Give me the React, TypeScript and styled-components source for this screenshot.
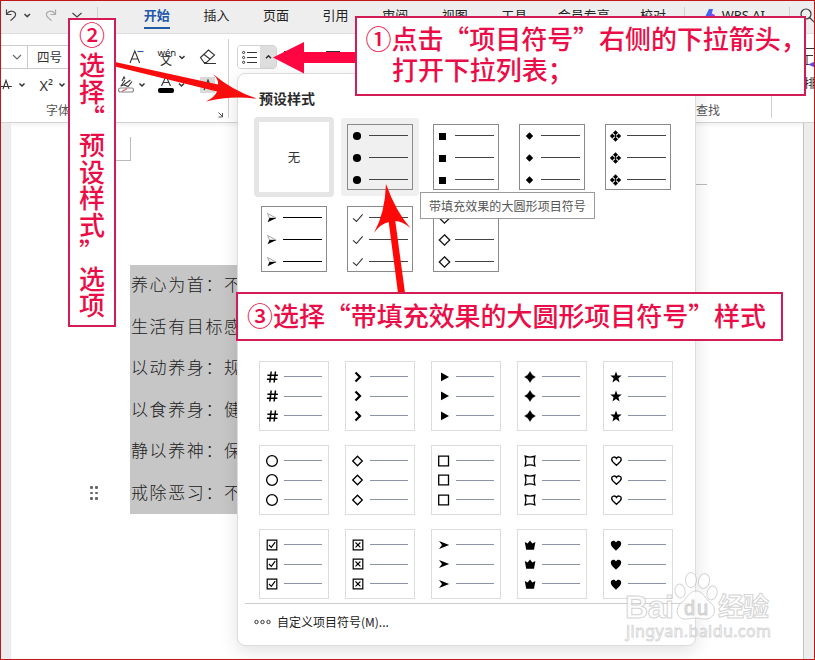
import React from "react";
import styled, { createGlobalStyle, css } from "styled-components";

const GlobalStyle = createGlobalStyle`
  * { box-sizing: border-box; }
  body { margin: 0; overflow: hidden; font-family: "Noto Sans CJK SC", "Noto Sans", sans-serif; }
  svg { display: block; flex: none; }
`;

const Screen = styled.div`
  position: relative;
  display: flex;
  flex-direction: column;
  width: 815px;
  height: 660px;
  overflow: hidden;
  background: #fff;
  color: #222;
`;

const Frame = styled.div`
  position: absolute;
  inset: 0;
  border: 1px solid #c01818;
  pointer-events: none;
`;

/* ---------- top tab bar ---------- */

const TabBar = styled.nav`
  display: flex;
  align-items: center;
  height: 34px;
  flex: none;
  background: #eeeeee;
  border-bottom: 1px solid #dedede;
`;

const QuickAccess = styled.div`
  display: flex;
  width: 127px;
  height: 33px;
  flex: none;
`;

const Tab = styled.div<{ $wide?: boolean; $active?: boolean }>`
  display: flex;
  flex-direction: column;
  align-items: center;
  width: ${(p) => (p.$wide ? 79 : 59.6)}px;
  flex: none;
  font-size: 13px;
  line-height: 20px;
  white-space: nowrap;
  color: ${(p) => (p.$active ? "#2458a8" : "#222")};
  font-weight: ${(p) => (p.$active ? 700 : 400)};
  &::after {
    content: "";
    width: 26px;
    height: 2px;
    margin-top: 2px;
    background: ${(p) => (p.$active ? "#2458a8" : "transparent")};
  }
`;

const TabDivider = styled.div<{ $gap: number }>`
  width: 1px;
  height: 20px;
  margin-left: ${(p) => p.$gap}px;
  background: #cfcfcf;
`;

const AiTab = styled.div`
  display: flex;
  align-items: center;
  gap: 5px;
  width: 86px;
  margin-left: 18px;
  padding-bottom: 3px;
  font-size: 13px;
  line-height: 20px;
  font-family: "Noto Sans", sans-serif;
  white-space: nowrap;
`;

/* ---------- ribbon ---------- */

const Ribbon = styled.section`
  display: flex;
  height: 89px;
  flex: none;
  background: #fff;
  border-bottom: 1px solid #d4d4d4;
`;

const FontGroup = styled.div`
  display: flex;
  flex-direction: column;
  width: 228px;
  padding-top: 11px;
  flex: none;
`;

const GroupEdge = styled.div<{ $top: number; $height: number }>`
  width: 1px;
  height: ${(p) => p.$height}px;
  margin-top: ${(p) => p.$top}px;
  background: #d0d0d0;
  flex: none;
`;

const ToolRow = styled.div`
  display: flex;
  align-items: center;
  height: 24px;
`;

const CommandRow = styled.div`
  display: flex;
  height: 30px;
`;

const FieldPart = styled.div<{ $width: number }>`
  display: flex;
  align-items: center;
  justify-content: flex-end;
  width: ${(p) => p.$width}px;
  height: 24px;
  border: 1px solid #cbcbcb;
  border-left: 0;
  font-size: 12.5px;
`;

const SizeField = styled(FieldPart)`
  justify-content: flex-start;
  padding: 0 0 2px 9px;
  color: #333;
`;

const GroupCaption = styled.div`
  display: flex;
  justify-content: space-between;
  align-items: center;
  height: 22px;
  padding: 0 3px 0 46px;
  font-size: 12px;
  line-height: 18px;
  color: #555;
`;

const CaptionIcon = styled.svg`
  margin-top: 10px;
`;

const ParagraphGroup = styled.div`
  display: flex;
  gap: 5px;
  width: 467px;
  flex: none;
  padding: 11px 0 0 8px;
`;

const SplitButton = styled.div`
  display: flex;
  width: 40px;
  height: 24px;
  border: 1px solid #d2d2d2;
  border-radius: 4px;
  overflow: hidden;
  background: #fff;
`;

const SplitHalf = styled.div<{ $pressed?: boolean }>`
  display: flex;
  align-items: center;
  justify-content: center;
  flex: ${(p) => (p.$pressed ? "0 0 16px" : "1")};
  background: ${(p) => (p.$pressed ? "#dedede" : "#fff")};
`;

const FindGroup = styled.div`
  display: flex;
  align-items: flex-end;
  width: 75px;
  flex: none;
  padding-bottom: 2px;
  font-size: 12px;
  line-height: 20px;
  color: #555;
`;

const ClippedGroup = styled.div`
  display: flex;
  flex-direction: column;
  width: 11px;
  margin-left: 32px;
  flex: none;
  padding-top: 12px;
  gap: 5px;
  overflow: hidden;
  font-size: 12px;
  line-height: 20px;
  white-space: nowrap;
`;

/* ---------- document ---------- */

const Workspace = styled.main`
  display: flex;
  flex: 1;
  padding: 0 11px 0 11px;
  background: #ececec;
`;

const Paper = styled.article`
  display: flex;
  flex: 1;
  border-right: 1px solid #c9c3c0;
  background: linear-gradient(#f3f3f3 0, #fff 5px);
`;

const PaperMargin = styled.div`
  display: flex;
  flex-direction: column;
  width: 119px;
  flex: none;
`;

const DragHandle = styled.div`
  display: grid;
  grid-template-columns: repeat(2, 3px);
  gap: 3px 2px;
  margin: 363px 0 0 79px;
`;

const DragDot = styled.i`
  width: 2.5px;
  height: 2.5px;
  border-radius: 1px;
  background: #666;
`;

const TextColumn = styled.div`
  display: flex;
  flex-direction: column;
  width: 566px;
`;

const MarginMark = styled.div`
  width: 1px;
  height: 24px;
  margin: 14px 0 104px 0;
  background: #bbb;
`;

const Selection = styled.div`
  width: 108px;
  overflow: hidden;
  background: #c6c6c6;
`;

const Paragraph = styled.p`
  margin: 0;
  padding-left: 1px;
  height: 41.5px;
  font-size: 17px;
  font-weight: 300;
  line-height: 37px;
  letter-spacing: 1.6px;
  white-space: nowrap;
  color: #222;
`;

const MarginTick = styled.div`
  width: 11px;
  height: 1px;
  margin-top: 61px;
  background: #bbb;
`;

/* ---------- bullet menu ---------- */

const Menu = styled.div`
  position: absolute;
  left: 237px;
  top: 73px;
  display: flex;
  flex-direction: column;
  width: 459px;
  height: 573px;
  border: 1px solid #dcdcdc;
  border-radius: 8px;
  background: #fff;
  box-shadow: 0 5px 18px rgba(0, 0, 0, 0.12);
`;

const MenuTitle = styled.h2`
  margin: 14px 0 0 21px;
  height: 21px;
  font-size: 14px;
  line-height: 20px;
  font-weight: 700;
  color: #2b2b2b;
`;

const PresetGrid = styled.div`
  display: grid;
  grid-template-columns: repeat(5, 86px);
  grid-auto-rows: 82px;
  margin: 6px 0 0 13px;
  height: 164px;
`;

const PresetSlot = styled.div<{ $hover?: boolean }>`
  display: flex;
  align-items: center;
  justify-content: center;
  width: 78px;
  height: 78px;
  margin: 3px 0 0 4px;
  border-radius: 3px;
  background: ${(p) => (p.$hover ? "#f0f0f0" : "transparent")};
`;

const NoneSlot = styled.div`
  display: flex;
  align-items: center;
  justify-content: center;
  width: 80px;
  height: 80px;
  margin: 2px 0 0 3px;
  padding-bottom: 2px;
  border: 5px solid #e5e5e5;
  border-radius: 4px;
  font-size: 12.5px;
  color: #333;
`;

const tile = css`
  display: flex;
  flex-direction: column;
`;

const PresetTile = styled.div`
  ${tile}
  width: 66px;
  height: 66px;
  border: 1px solid #8a8a8a;
`;

const SymbolGrid = styled.div`
  display: grid;
  grid-template-columns: repeat(5, 70px);
  grid-auto-rows: 70px;
  gap: 14px 16px;
  margin: 82px 0 0 21px;
`;

const SymbolTile = styled.div`
  ${tile}
  width: 70px;
  height: 70px;
  padding-top: 5px;
  border: 1px solid #dcdcdc;
`;

const BulletLine = styled.div<{ $height: number; $pad: number; $gap: number; $lift?: boolean }>`
  display: flex;
  align-items: center;
  gap: ${(p) => p.$gap}px;
  height: ${(p) => p.$height}px;
  flex: none;
  padding-left: ${(p) => p.$pad}px;
  padding-bottom: ${(p) => (p.$lift ? 1 : 0)}px;
`;

const Rule = styled.span<{ $color: string; $width: number }>`
  width: ${(p) => p.$width}px;
  height: 1px;
  background: ${(p) => p.$color};
`;

const MenuFooter = styled.div`
  display: flex;
  align-items: center;
  gap: 6px;
  margin: 4px 6px 0 7px;
  padding: 0 0 1px 9px;
  height: 37px;
  border-top: 1px solid #cfcfcf;
  font-size: 12px;
  color: #222;
`;

const Tooltip = styled.div`
  position: absolute;
  left: 420px;
  top: 192px;
  width: 175px;
  height: 27px;
  padding-left: 8px;
  border: 1px solid #9a9a9a;
  background: #fff;
  font-size: 12px;
  line-height: 25px;
  letter-spacing: 0.07px;
  white-space: nowrap;
  color: #555;
`;

/* ---------- annotations ---------- */

const Callout = styled.div<{ $x: number; $y: number; $w: number; $h: number }>`
  position: absolute;
  left: ${(p) => p.$x}px;
  top: ${(p) => p.$y}px;
  width: ${(p) => p.$w}px;
  height: ${(p) => p.$h}px;
  border: 2px solid #d31c55;
  background: #fff;
  color: #ea0d47;
  font-size: 26px;
  font-weight: 500;
  line-height: 31px;
  white-space: nowrap;
`;

const CalloutLine = styled.div<{ $indent: number; $top?: number }>`
  padding-left: ${(p) => p.$indent}px;
  margin-top: ${(p) => p.$top ?? 0}px;
  letter-spacing: -0.05px;
`;

const VerticalText = styled.div`
  display: flex;
  flex-direction: column;
  align-items: center;
  padding-top: 1px;
  font-size: 26px;
`;

const VerticalChar = styled.span<{ $h?: number }>`
  height: ${(p) => p.$h ?? 26.7}px;
  line-height: 26.7px;
`;

const ArrowLayer = styled.svg`
  position: absolute;
  left: 0;
  top: 0;
  pointer-events: none;
`;

const Watermark = styled.div`
  position: absolute;
  left: 624px;
  top: 570px;
  opacity: 0.75;
`;

/* ---------- bullet glyphs ---------- */

type Kind =
  | "disc" | "block" | "gem" | "quad" | "wing" | "tick" | "openGem"
  | "hash" | "angle" | "play" | "spark" | "star"
  | "ring" | "rhomb" | "box" | "pinch" | "heartLine"
  | "checkBox" | "crossBox" | "dart" | "crown" | "heart";

const heartPath = "M8 13.2 C6.4 11.4 2.8 9.2 2.8 6.1 C2.8 3.1 6.6 2.3 8 5 C9.4 2.3 13.2 3.1 13.2 6.1 C13.2 9.2 9.6 11.4 8 13.2Z";

const glyphs: Record<Kind, React.ReactNode> = {
  disc: <circle cx="8" cy="8" r="4.1" />,
  block: <path d="M4 5h7v7H4z" />,
  gem: <path d="M8.500 4.300 12.200 8 8.500 11.700 4.800 8z" />,
  quad: (
    <>
      <path d="M8.500 2.300 14.200 8 8.500 13.700 2.800 8z" />
      <path d="M5.600 5.100 11.400 10.900M11.400 5.100 5.600 10.900" stroke="#fff" strokeWidth="1.100" />
      <path d="M8.500 6.700 9.800 8 8.500 9.300 7.200 8z" />
    </>
  ),
  wing: (
    <>
      <path d="M4.500 3.500 13 8 6.500 8z" fill="#fff" stroke="#999" strokeWidth=".9" />
      <path d="M4.500 12.200 6.500 8 13.500 8z" />
    </>
  ),
  tick: <path d="M4 8.300 7.500 11.500 13.600 4.300" fill="none" stroke="#333" strokeWidth="1.100" />,
  openGem: <path d="M9.500 2.800 14.700 8 9.500 13.200 4.300 8z" fill="#fff" stroke="#111" strokeWidth="1.300" />,
  hash: <path d="M7.200 2.500 5.800 13.500M11.500 2.500 10.100 13.500M3.400 6.200H13.900M2.900 10.200H13.400" fill="none" stroke="#000" strokeWidth="1.500" />,
  angle: <path d="M5.500 3.500 10 8 5.500 12.500" fill="none" stroke="#000" strokeWidth="2.200" />,
  play: <path d="M5 3.500 13 8 5 12.300z" />,
  spark: <path d="M8 2.600 Q9.500 6.500 13.400 8 Q9.500 9.500 8 13.400 Q6.500 9.500 2.600 8 Q6.500 6.500 8 2.600z" stroke="#000" strokeWidth=".4" strokeLinejoin="round" />,
  star: <path d="M8 2.400 9.500 6.600 13.700 6.600 10.400 9.200 11.600 13.400 8 10.900 4.400 13.400 5.600 9.200 2.300 6.600 6.500 6.600z" />,
  ring: <circle cx="8" cy="8" r="5.400" fill="none" stroke="#000" strokeWidth="1.300" />,
  rhomb: <path d="M7.500 3.200 12.300 8 7.500 12.800 2.700 8z" fill="none" stroke="#000" strokeWidth="1.300" />,
  box: <path d="M2.700 3.200h9.800v9.600H2.700z" fill="none" stroke="#000" strokeWidth="1.300" />,
  pinch: <path d="M3.200 3.200 Q8 4.900 12.800 3.200 Q11.300 8 12.800 12.800 Q8 11.100 3.200 12.800 Q4.700 8 3.200 3.200z" fill="none" stroke="#000" strokeWidth="1.300" />,
  heartLine: <path d={heartPath} fill="none" stroke="#000" strokeWidth="1.500" transform="translate(1.100 1.200) scale(.92 .84)" />,
  checkBox: (
    <g fill="none" stroke="#000">
      <path d="M3.200 3.200h9.600v9.600H3.200z" strokeWidth="1.200" />
      <path d="M5 8 7.300 10.300 11.200 5.200" strokeWidth="1.200" />
    </g>
  ),
  crossBox: (
    <g fill="none" stroke="#000">
      <path d="M3.200 3.200h9.600v9.600H3.200z" strokeWidth="1.200" />
      <path d="M5.500 5.500 10.400 10.400M10.400 5.500 5.500 10.400" strokeWidth="1.100" />
    </g>
  ),
  dart: <path d="M3 4 13.200 8 3 12 6 8z" />,
  crown: <path d="M2.800 5.100 5.600 6.600 8 3.400 10.400 6.600 13.400 5.100 12 12.800 4.200 12.800z" />,
  heart: <path d={heartPath} transform="translate(0 .500)" />,
};

const Glyph = ({ kind }: { kind: Kind }) => (
  <svg width="16" height="16" viewBox="0 0 16 16" fill="#000">{glyphs[kind]}</svg>
);

const Preset = ({ kind }: { kind: Kind }) => (
  <PresetTile>
    {[0, 1, 2].map((i) => (
      <BulletLine key={i} $height={22} $pad={1} $gap={4} $lift>
        <Glyph kind={kind} />
        <Rule $color={kind === "wing" ? "#000" : "#444"} $width={39} />
      </BulletLine>
    ))}
  </PresetTile>
);

const SymbolPreview = ({ kind }: { kind: Kind }) => (
  <SymbolTile>
    {[0, 1, 2].map((i) => (
      <BulletLine key={i} $height={19.5} $pad={4} $gap={4}>
        <Glyph kind={kind} />
        <Rule $color="#8b93a6" $width={38} />
      </BulletLine>
    ))}
  </SymbolTile>
);

const presets: Kind[] = ["disc", "block", "gem", "quad", "wing", "tick", "openGem"];
const symbols: Kind[] = [
  "hash", "angle", "play", "spark", "star",
  "ring", "rhomb", "box", "pinch", "heartLine",
  "checkBox", "crossBox", "dart", "crown", "heart",
];
const tabs = ["开始", "插入", "页面", "引用", "审阅", "视图", "工具", "会员专享", "校对"];
const paragraphs = ["养心为首：不", "生活有目标感", "以动养身：规", "以食养身：健", "静以养神：保", "戒除恶习：不"];

/* ---------- toolbar drawings ---------- */

const QuickIcons = () => (
  <svg width="127" height="33" fill="none" stroke="#444" strokeWidth="1.200">
    <path d="M6.500 9.500v5h5M6.800 14c3-4.500 8.800-3 8.800.6 0 2.500-2 3.600-5.200 6" />
    <path d="m24.500 14 2.700 2.700L30 14" strokeWidth="1.600" />
    <path d="M55.500 9.500v5h-5M55.200 14c-3-4.500-8.800-3-8.800.6 0 2.500 2 3.600 5.200 6" stroke="#aaa" />
    <path d="m72.500 13 4.500 4 4.500-4" />
    <path d="M97.500 7v20" stroke="#cfcfcf" strokeWidth="1" />
  </svg>
);

const Chevron = ({ up }: { up?: boolean }) => (
  <svg width="7" height="6" fill="none" stroke="#333" strokeWidth="1.500">
    <path d={up ? "M1 4.300 3.500 1.800 6 4.300" : "M1 1.500 3.500 4 6 1.500"} />
  </svg>
);

const FieldChevron = () => (
  <svg width="16" height="8" fill="none" stroke="#666" strokeWidth="1.100"><path d="m2 2 4 4 4-4" /></svg>
);

const FontIcons = () => (
  <svg width="133" height="24" fill="none" stroke="#333" strokeWidth="1.100">
    <path d="m35 18 4.800-12 4.800 12M36.800 14h6" />
    <path d="M42.500 6.500h6" stroke="#2458a8" />
    <text x="62.500" y="11" fontSize="9.500" fill="#222" stroke="none" fontFamily="Noto Sans">wén</text>
    <text x="65" y="19.500" fontSize="12" fill="#222" stroke="none" fontFamily="Noto Sans CJK SC">文</text>
    <path d="m84.500 11 2.500 2.500 2.500-2.500" strokeWidth="1.500" />
    <path d="m105.500 12.500 8-7.500 6 5-8 7.500h-2.500zM109 9.500l6.500 5M109 18.500h12" />
  </svg>
);

const StyleIcons = () => (
  <svg width="228" height="30" fill="none" stroke="#333" strokeWidth="1.100">
    <path d="M0 17.500h12M3 20l3-8.500 3 8.500" />
    <path d="m19.500 14.500 2.500 2.500 2.500-2.500M59.500 14.500l2.500 2.500 2.500-2.500M139.500 14.500l2.500 2.500 2.500-2.500M179 14.500l2.500 2.500 2.500-2.500" strokeWidth="1.500" />
    <text x="39.500" y="21.500" fontSize="14.500" fill="#333" stroke="none" fontFamily="Noto Sans">X²</text>
    <path d="m120.500 17 3-1 7-5M122 12l2-4 1 2m-1 6 4 1.500 4-5M121 17l4-6" />
    <rect x="118.500" y="19" width="15" height="4" rx="2" stroke="#888" />
    <path d="m122 22.500 5-3" stroke="#e0506a" />
    <path d="m161.500 17 4.500-10 4.500 10M163 13.500h6" />
    <rect x="158" y="19" width="16" height="5" rx="2" fill="#000" stroke="none" />
    <rect x="200" y="8" width="15" height="16" fill="#d9d9d9" stroke="none" />
    <path d="m204 21 4-10 4 10M205.500 17h5" />
  </svg>
);

const App = () => (
  <>
    <GlobalStyle />
    <Screen lang="zh-CN">
      <TabBar>
        <QuickAccess><QuickIcons /></QuickAccess>
        {tabs.map((t, i) => (
          <Tab key={t} $active={i === 0} $wide={t.length > 2}>{t}</Tab>
        ))}
        <TabDivider $gap={1} />
        <AiTab>
          <svg width="14" height="15">
            <path d="M6 1h4L6.500 13H4L1 11z" fill="#4264f0" />
            <path d="m8 5 4 2-2 6H7z" fill="#9a44e8" />
          </svg>
          WPS AI
        </AiTab>
        <TabDivider $gap={0} />
        <svg width="24" height="24" fill="none" stroke="#333" strokeWidth="1.200">
          <circle cx="16" cy="9" r="5" /><path d="m19.500 12.500 5 5" />
        </svg>
      </TabBar>

      <Ribbon>
        <FontGroup>
          <ToolRow>
            <FieldPart $width={28}><FieldChevron /></FieldPart>
            <SizeField $width={67}>四号</SizeField>
            <FontIcons />
          </ToolRow>
          <CommandRow><StyleIcons /></CommandRow>
          <GroupCaption>
            字体
            <CaptionIcon width="8" height="8" fill="none" stroke="#555"><path d="M1.500 1.500 5 5M5.500 2v4h-4" /></CaptionIcon>
          </GroupCaption>
        </FontGroup>
        <GroupEdge $top={5} $height={79} />
        <ParagraphGroup>
          <SplitButton>
            <SplitHalf>
              <svg width="15" height="14" fill="none" stroke="#333">
                <path d="M5 2.500h10M5 7.500h10M5 12.500h10" />
                <circle cx="1.600" cy="2.500" r="1.100" /><circle cx="1.600" cy="7.500" r="1.100" /><circle cx="1.600" cy="12.300" r="1.100" />
              </svg>
            </SplitHalf>
            <SplitHalf $pressed><Chevron up /></SplitHalf>
          </SplitButton>
          <svg width="66" height="24" fill="none" stroke="#333">
            <path d="M2 6.500h3M44 6.500h14M44 17.500h14" />
          </svg>
        </ParagraphGroup>
        <FindGroup>查找</FindGroup>
        <GroupEdge $top={5} $height={79} />
        <ClippedGroup>
          <svg width="11" height="22" fill="none" stroke="#333">
            <path d="M0 2.500h10M0 9.500h9M0 18.500h5M3 9v10" /><path d="m4 18.500 7-3v6z" fill="#6947dd" stroke="none" />
          </svg>
          排版
        </ClippedGroup>
      </Ribbon>

      <Workspace>
        <Paper>
          <PaperMargin>
            <DragHandle>{[0, 1, 2, 3, 4, 5].map((i) => <DragDot key={i} />)}</DragHandle>
          </PaperMargin>
          <TextColumn>
            <MarginMark />
            <Selection>
              {paragraphs.map((p) => <Paragraph key={p}>{p}</Paragraph>)}
            </Selection>
          </TextColumn>
          <MarginTick />
        </Paper>
      </Workspace>

      <Menu>
        <MenuTitle>预设样式</MenuTitle>
        <PresetGrid>
          <NoneSlot>无</NoneSlot>
          {presets.map((k) => (
            <PresetSlot key={k} $hover={k === "disc"}><Preset kind={k} /></PresetSlot>
          ))}
        </PresetGrid>
        <SymbolGrid>
          {symbols.map((k) => <SymbolPreview key={k} kind={k} />)}
        </SymbolGrid>
        <MenuFooter>
          <svg width="17" height="6" fill="none" stroke="#333">
            <circle cx="2.500" cy="3" r="1.700" /><circle cx="8.500" cy="3" r="1.700" /><circle cx="14.500" cy="3" r="1.700" />
          </svg>
          自定义项目符号(M)...
        </MenuFooter>
      </Menu>

      <Tooltip>带填充效果的大圆形项目符号</Tooltip>

      <ArrowLayer width="815" height="660">
        <path d="M116 160.500h14.500" stroke="#bbb" />
        <path d="M273 57.500 304 42V52H356V63H304V73.500z" fill="#ff0542" />
        <path d="M115 62 218 84.500Q219 80 213 74Q233 91 258 99Q232 95 206 101.500Q215 97 217 91.500L115 66.500z" fill="#f80c0c" />
        <path d="M386 184Q396 212 410.500 228Q402 221 395.300 221L405 293H398L388.700 222Q380 224 374 233Q385 213 386 184z" fill="#ff0808" />
      </ArrowLayer>

      <Callout $x={355} $y={16} $w={451} $h={80}>
        <CalloutLine $indent={8.5} $top={4}>①点击“项目符号”右侧的下拉箭头，</CalloutLine>
        <CalloutLine $indent={35}>打开下拉列表；</CalloutLine>
      </Callout>
      <Callout $x={68} $y={18} $w={48} $h={309}>
        <VerticalText>
          <VerticalChar $h={30}>②</VerticalChar>
          {[..."选择“预设样式”选项"].map((c, i) => <VerticalChar key={i}>{c}</VerticalChar>)}
        </VerticalText>
      </Callout>
      <Callout $x={236} $y={292} $w={547} $h={49}>
        <CalloutLine $indent={9} $top={5}>③选择“带填充效果的大圆形项目符号”样式</CalloutLine>
      </Callout>

      <Watermark>
        <svg width="152" height="76" fill="#fff" stroke="#c6c6c6" strokeWidth="1">
          <text x="1" y="48" fontFamily="Liberation Sans" fontWeight="700" fontSize="32" textLength="49">Bai</text>
          <ellipse cx="56" cy="21" rx="5" ry="7" transform="rotate(-12 56 21)" />
          <ellipse cx="67" cy="10" rx="5.500" ry="7.500" />
          <ellipse cx="80" cy="11" rx="5.500" ry="7.500" transform="rotate(12 80 11)" />
          <ellipse cx="88" cy="23" rx="5" ry="7" transform="rotate(15 88 23)" />
          <path d="M72 21c7 0 9 8 15 12 6 5 4 15-4 16-4 .5-7-1-11-1s-8 1.500-12 1c-8-1-9-11-3-16 6-4 8-12 15-12z" />
          <text x="60" y="45" fontFamily="Liberation Sans" fontSize="20" textLength="24" fill="#d8d8d8" stroke="#c4c4c4">du</text>
          <text x="94" y="46" fontFamily="Noto Sans CJK SC" fontWeight="700" fontSize="26" textLength="51">经验</text>
          <text x="2" y="67" fontFamily="Noto Sans" fontSize="16" textLength="145" strokeWidth=".8">jingyan.baidu.com</text>
        </svg>
      </Watermark>
      <Frame />
    </Screen>
  </>
);

export default App;
